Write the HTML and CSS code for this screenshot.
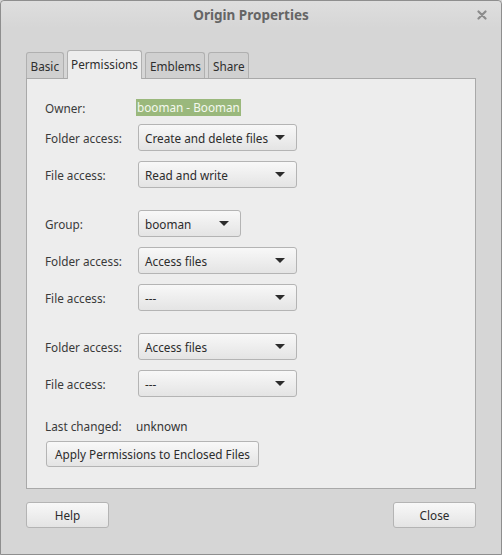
FILE: index.html
```html
<!DOCTYPE html>
<html>
<head>
<meta charset="utf-8">
<link rel="stylesheet" href="styles.css">
</head>
<body>
<div class="window">
  <div class="titlebar">
    <span class="title">Origin Properties</span>
    <svg class="close" width="10" height="10" viewBox="0 0 10 10"><path d="M1.5 1.5 L8.5 8.5 M8.5 1.5 L1.5 8.5" stroke="#8c8c8c" stroke-width="2.2" stroke-linecap="round"/></svg>
  </div>
  <div class="content">
    <div class="tabs">
      <div class="tab">Basic</div>
      <div class="tab active">Permissions</div>
      <div class="tab">Emblems</div>
      <div class="tab">Share</div>
    </div>
    <div class="panel">
      <div class="row owner-row">
        <span class="label">Owner:</span>
        <span class="owner">booman - Booman</span>
      </div>
      <div class="row r-tight">
        <span class="label">Folder access:</span>
        <div class="combo wide"><span>Create and delete files</span><i class="arrow"></i></div>
      </div>
      <div class="row">
        <span class="label">File access:</span>
        <div class="combo wide"><span>Read and write</span><i class="arrow"></i></div>
      </div>
      <div class="row r-section">
        <span class="label">Group:</span>
        <div class="combo narrow"><span>booman</span><i class="arrow"></i></div>
      </div>
      <div class="row">
        <span class="label">Folder access:</span>
        <div class="combo wide"><span>Access files</span><i class="arrow"></i></div>
      </div>
      <div class="row">
        <span class="label">File access:</span>
        <div class="combo wide"><span>---</span><i class="arrow"></i></div>
      </div>
      <div class="row r-section">
        <span class="label">Folder access:</span>
        <div class="combo wide"><span>Access files</span><i class="arrow"></i></div>
      </div>
      <div class="row">
        <span class="label">File access:</span>
        <div class="combo wide"><span>---</span><i class="arrow"></i></div>
      </div>
      <div class="row r-last">
        <span class="label">Last changed:</span>
        <span class="value">unknown</span>
      </div>
      <div class="apply-row">
        <button class="btn apply">Apply Permissions to Enclosed Files</button>
      </div>
    </div>
    <div class="footer">
      <button class="btn dlg">Help</button>
      <button class="btn dlg">Close</button>
    </div>
  </div>
</div>
</body>
</html>
```

FILE: styles.css
```css
html, body {
  margin: 0;
  padding: 0;
  background: #d6d6d6;
}
body {
  font-family: "Noto Sans", "DejaVu Sans", sans-serif;
  font-size: 11.75px;
  color: #333333;
}
.window {
  width: 502px;
  height: 555px;
  box-sizing: border-box;
  border: 1px solid #8e8e8e;
  border-radius: 4px 4px 0 0;
  background: #d6d6d6;
  display: flex;
  flex-direction: column;
}
.titlebar {
  height: 27px;
  position: relative;
  display: flex;
  align-items: center;
  justify-content: center;
  background: linear-gradient(#dedede, #d6d6d6);
  border-radius: 4px 4px 0 0;
}
.title {
  font-weight: bold;
  font-size: 13.5px;
  color: #656565;
}
.close {
  position: absolute;
  right: 14px;
  top: 9px;
}
.content {
  padding: 23px 25px 0 25px;
  display: flex;
  flex-direction: column;
}
.tabs {
  display: flex;
  align-items: flex-end;
  gap: 3px;
  height: 28px;
  position: relative;
  z-index: 1;
  margin-bottom: -1px;
}
.tab {
  height: 26px;
  box-sizing: border-box;
  padding: 1px 3.5px 0 3.5px;
  border: 1px solid #b0b0b0;
  border-bottom: none;
  border-radius: 3px 3px 0 0;
  background: #d0d0d0;
  display: flex;
  align-items: center;
  color: #2e2e2e;
  margin-bottom: 1px;
}
.tab.active {
  height: 29px;
  background: #ededed;
  margin-bottom: 0;
  padding-top: 0;
  padding-bottom: 3px;
}
.panel {
  height: 411px;
  box-sizing: border-box;
  border: 1px solid #a9a9a9;
  background: #ededed;
  padding: 15px 18px 0 18px;
  display: flex;
  flex-direction: column;
}
.row {
  display: flex;
  align-items: center;
  height: 27px;
  margin-top: 10px;
}
.owner-row {
  margin-top: 0;
}
.r-tight {
  margin-top: 3px;
}
.r-section {
  margin-top: 22px;
}
.r-last {
  margin-top: 15px;
}
.label {
  width: 91px;
  flex: none;
  color: #3a3a3a;
}
.owner {
  background: #9ab87c;
  color: #f4f8ef;
  padding: 0 1px;
  line-height: 17px;
}
.value {
  color: #333;
}
.combo {
  margin-left: 2px;
  height: 27px;
  box-sizing: border-box;
  border: 1px solid #b4b4b4;
  border-radius: 3px;
  background: linear-gradient(#f8f8f8, #e4e4e4);
  display: flex;
  align-items: center;
  justify-content: space-between;
  padding: 0 11px 0 6px;
  color: #2c2c2c;
  white-space: nowrap;
}
.combo.wide { width: 159px; }
.combo.narrow { width: 103px; }
.arrow {
  width: 0;
  height: 0;
  border-left: 5px solid transparent;
  border-right: 5px solid transparent;
  border-top: 5px solid #2c2c2c;
}
.apply-row {
  margin-top: 2px;
  display: flex;
}
.btn {
  font-family: inherit;
  font-size: 11.75px;
  color: #2c2c2c;
  height: 26px;
  box-sizing: border-box;
  border: 1px solid #b4b4b4;
  border-radius: 3px;
  background: linear-gradient(#f8f8f8, #e4e4e4);
  padding: 0 4px;
  margin: 0;
  white-space: nowrap;
}
.apply {
  width: 213px;
  margin-left: 1px;
}
.footer {
  display: flex;
  justify-content: space-between;
  margin-top: 13px;
}
.dlg {
  width: 83px;
}
```
